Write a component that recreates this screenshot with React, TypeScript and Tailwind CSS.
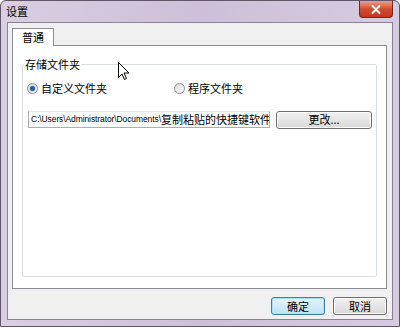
import React from "react";

const cjk = { fontFamily: '"Noto Sans CJK SC", "Liberation Sans", sans-serif' };

function Radio({ checked }: { checked?: boolean }) {
  return (
    <span className="w-[11px] h-[11px] rounded-full border border-[#8e8f8f] bg-gradient-to-br from-[#dcdcdc] to-[#fbfbfb] flex items-center justify-center">
      {checked && <span className="w-[5px] h-[5px] rounded-full bg-[#2a5d9c] shadow-[0_0_2px_#6ea6e0]" />}
    </span>
  );
}

function Button({ label, focus }: { label: string; focus?: boolean }) {
  return (
    <div
      className={`h-[18px] rounded-[3px] border flex items-center justify-center text-[11px] text-black ${
        focus
          ? "border-[#3c7fb1] bg-gradient-to-b from-[#e5f4fc] to-[#bde4f7] shadow-[inset_0_0_0_1px_#a9dff9]"
          : "border-[#707070] bg-gradient-to-b from-[#f2f2f2] to-[#d8d8d8] shadow-[inset_0_0_0_1px_#fcfcfc]"
      }`}
    >
      {label}
    </div>
  );
}

export default function App() {
  return (
    <div className="relative w-[400px] h-[327px] overflow-hidden" style={cjk}>
      <div className="w-full h-full flex flex-col rounded-t-[6px] border border-[#5e5566] bg-gradient-to-r from-[#d9cfe0] via-[#cdbfd9] to-[#d6cbe0]">
        {/* title bar */}
        <div className="h-[21px] flex items-start justify-between">
          <span className="pl-[5px] pt-[4px] text-[11px] leading-[13px] text-black">设置</span>
          <div className="mr-[6px] w-[34px] h-[17px] rounded-b-[4px] border border-t-0 border-[#6b2b20] bg-gradient-to-b from-[#e8a08c] via-[#cf4b2f] to-[#c5361d] flex items-center justify-center">
            <svg width="10" height="9" viewBox="0 0 10 9">
              <path d="M1.5 1 L8.5 8 M8.5 1 L1.5 8" stroke="#fff" strokeWidth="2" strokeLinecap="round" />
            </svg>
          </div>
        </div>

        {/* client */}
        <div className="flex-1 mx-[6px] mb-[6px] border border-[#8a7f98] bg-[#f0f0f0] flex flex-col px-[4px] pt-[4px]">
          <div className="flex">
            <div className="h-[18px] px-[9px] border border-b-0 border-[#898c95] bg-white text-[11px] leading-[17px] text-black relative top-[1px] z-10">
              普通
            </div>
          </div>
          <div className="h-[244px] border border-[#898c95] bg-white mr-[1px] px-[9px] pt-[18px]">
            {/* group box */}
            <div className="relative h-[213px] border border-[#d5dfe5] rounded-[2px]">
              <span className="absolute -top-[8px] left-[1px] bg-white px-[1px] text-[11px] leading-[14px] text-black">
                存储文件夹
              </span>
              <div className="flex items-center pt-[15px] pl-[4px] text-[11px] text-black">
                <div className="flex items-center gap-[3px] w-[147px]">
                  <Radio checked />
                  <span>自定义文件夹</span>
                </div>
                <div className="flex items-center gap-[3px]">
                  <Radio />
                  <span>程序文件夹</span>
                </div>
              </div>
              <div className="flex items-center mt-[14px] pl-[5px]">
                <div className="w-[242px] h-[17px] border border-[#abadb3] border-t-[#e3e9ef] flex items-center pl-[2px] text-black whitespace-nowrap overflow-hidden">
                  <span className="text-[8.5px] tracking-[-0.1px]" style={{ fontFamily: '"Liberation Sans", sans-serif' }}>
                    C:\Users\Administrator\Documents\
                  </span>
                  <span className="text-[11px]">复制粘贴的快捷键软件</span>
                </div>
                <div className="w-[96px] ml-[6px]">
                  <Button label="更改..." />
                </div>
              </div>
            </div>
          </div>

          {/* footer buttons */}
          <div className="flex justify-end gap-[8px] pt-[8px] pr-[1px]">
            <div className="w-[54px]">
              <Button label="确定" focus />
            </div>
            <div className="w-[54px]">
              <Button label="取消" />
            </div>
          </div>
        </div>
      </div>

      {/* mouse cursor */}
      <svg className="absolute left-[118px] top-[62px]" width="12" height="19" viewBox="0 0 12 19">
        <path d="M0.5 0.5 L0.5 15.5 L4 12 L6.5 17.5 L8.5 16.5 L6 11 L11 11 Z" fill="#fff" stroke="#000" strokeWidth="1" strokeLinejoin="round" />
      </svg>
    </div>
  );
}
